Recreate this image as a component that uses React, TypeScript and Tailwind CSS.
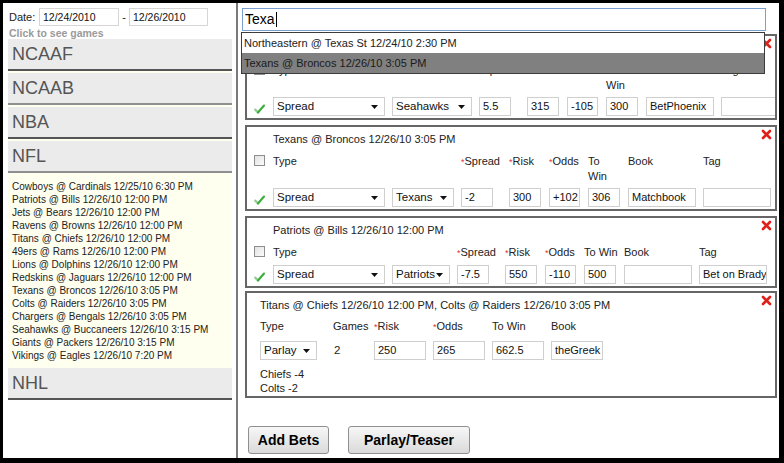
import React from "react";

const sans = "font-['Liberation_Sans',Arial,sans-serif]";

function Check() {
  return (
    <svg width="11" height="10" viewBox="0 0 11 10">
      <path d="M1.2 5.6 L4 8.4" fill="none" stroke="#8fd08f" strokeWidth="2.2" strokeLinecap="round" />
      <path d="M4 8.4 L10 1.6" fill="none" stroke="#3fae3f" strokeWidth="2.2" strokeLinecap="round" />
    </svg>
  );
}

function RedX() {
  return (
    <svg width="11" height="11" viewBox="0 0 11 11">
      <path d="M2 2 L9 9 M9 2 L2 9" fill="none" stroke="#e0201a" strokeWidth="2.6" strokeLinecap="round" />
    </svg>
  );
}

function Checkbox() {
  return <div className="mt-[1px] h-[11px] w-[11px] border border-[#8e8e8e] bg-gradient-to-br from-[#e2e2e2] to-[#fbfbfb]" />;
}

function Arrow() {
  return (
    <svg width="7" height="4" viewBox="0 0 7 4" className="shrink-0">
      <path d="M0 0 L7 0 L3.5 4 Z" fill="#111" />
    </svg>
  );
}

function Inp({ v, cls }: { v: string; cls: string }) {
  return (
    <div className={`h-[19px] shrink-0 overflow-hidden whitespace-nowrap border border-[#cfcfcf] bg-white pl-[3px] pr-[1px] text-[11px] leading-[17px] text-[#111] ${cls}`}>
      {v}
    </div>
  );
}

function Sel({ v, cls }: { v: string; cls: string }) {
  return (
    <div className={`flex h-[19px] shrink-0 items-center justify-between border border-[#cfcfcf] bg-white pl-[3px] pr-[6px] text-[11.5px] text-[#111] ${cls}`}>
      <span>{v}</span>
      <Arrow />
    </div>
  );
}

function Req({ t }: { t: string }) {
  return (
    <span className="whitespace-nowrap">
      <span className="text-[9px] text-[#e03030]">*</span>
      {t}
    </span>
  );
}

type Bet = {
  title: string;
  team: string;
  teamW: string;
  spread: string;
  risk: string;
  odds: string;
  win: string;
  book: string;
  tag: string;
  twoLine: boolean;
};

function BetCard({ b, mt }: { b: Bet; mt: string }) {
  return (
    <div className={`relative ml-[7px] w-[532px] overflow-hidden border-2 border-[#666] bg-white pb-[2px] pl-[7px] pt-[5px] ${mt}`}>
      <div className="absolute right-[3px] top-[2px]">
        <RedX />
      </div>
      <div className="pl-[19px] text-[11px] leading-[14px] text-[#222]">{b.title}</div>
      <div className="mt-[8px] flex items-start text-[11px] leading-[15px] text-[#222]">
        <div className="w-[19px] shrink-0">
          <Checkbox />
        </div>
        <div className="w-[112px] shrink-0">Type</div>
        <div className={`ml-[7px] shrink-0 ${b.teamW}`} />
        <div className="ml-[7px] w-[32px] shrink-0">
          <Req t="Spread" />
        </div>
        <div className="ml-[16px] w-[32px] shrink-0">
          <Req t="Risk" />
        </div>
        <div className="ml-[8px] w-[31px] shrink-0">
          <Req t="Odds" />
        </div>
        <div className="ml-[8px] w-[32px] shrink-0 whitespace-nowrap">
          {b.twoLine ? (
            <>
              To
              <br />
              Win
            </>
          ) : (
            "To Win"
          )}
        </div>
        <div className="ml-[8px] w-[68px] shrink-0">Book</div>
        <div className="ml-[7px] w-[68px] shrink-0">Tag</div>
      </div>
      <div className="mt-[4px] flex items-center">
        <div className="w-[19px] shrink-0 pt-[4px]">
          <Check />
        </div>
        <Sel v="Spread" cls="w-[112px]" />
        <Sel v={b.team} cls={`ml-[7px] ${b.teamW}`} />
        <Inp v={b.spread} cls="ml-[7px] w-[32px]" />
        <Inp v={b.risk} cls="ml-[16px] w-[32px]" />
        <Inp v={b.odds} cls="ml-[8px] w-[31px]" />
        <Inp v={b.win} cls="ml-[8px] w-[32px]" />
        <Inp v={b.book} cls="ml-[8px] w-[68px]" />
        <Inp v={b.tag} cls="ml-[7px] w-[68px]" />
      </div>
    </div>
  );
}

const games = [
  "Cowboys @ Cardinals 12/25/10 6:30 PM",
  "Patriots @ Bills 12/26/10 12:00 PM",
  "Jets @ Bears 12/26/10 12:00 PM",
  "Ravens @ Browns 12/26/10 12:00 PM",
  "Titans @ Chiefs 12/26/10 12:00 PM",
  "49ers @ Rams 12/26/10 12:00 PM",
  "Lions @ Dolphins 12/26/10 12:00 PM",
  "Redskins @ Jaguars 12/26/10 12:00 PM",
  "Texans @ Broncos 12/26/10 3:05 PM",
  "Colts @ Raiders 12/26/10 3:05 PM",
  "Chargers @ Bengals 12/26/10 3:05 PM",
  "Seahawks @ Buccaneers 12/26/10 3:15 PM",
  "Giants @ Packers 12/26/10 3:15 PM",
  "Vikings @ Eagles 12/26/10 7:20 PM",
];

function LeagueHead({ name, line }: { name: string; line: string }) {
  return (
    <div className={`flex h-[32px] items-center border-b-2 bg-[#ebebeb] pl-[4px] text-[18px] text-[#555] ${line}`}>
      {name}
    </div>
  );
}

export default function App() {
  return (
    <div className={`h-[463px] w-[784px] bg-black pb-[5px] pl-[3px] pr-[5px] pt-[3px] ${sans}`}>
      <div className="flex h-full bg-white">
        {/* Left panel */}
        <div className="w-[235px] shrink-0 border-r-2 border-[#7a7a7a] pt-[5px]">
          <div className="flex h-[18px] items-center pl-[6px] text-[11px] text-[#222]">
            <span className="w-[30px] shrink-0">Date:</span>
            <div className="h-[18px] w-[80px] border border-[#d6d6d6] pl-[3px] text-[10.5px] leading-[16px] text-[#111]">12/24/2010</div>
            <span className="w-[10px] text-center">-</span>
            <div className="h-[18px] w-[79px] border border-[#d6d6d6] pl-[3px] text-[10.5px] leading-[16px] text-[#111]">12/26/2010</div>
          </div>
          <div className="mt-[2px] pl-[6px] text-[10.5px] font-bold leading-[11px] text-[#9a9a9a]">Click to see games</div>
          <div className="ml-[5px] w-[224px] bg-[#fffff0]">
            <LeagueHead name="NCAAF" line="border-[#555]" />
            <div className="h-[2px]" />
            <LeagueHead name="NCAAB" line="border-[#8f8f8f]" />
            <div className="h-[2px]" />
            <LeagueHead name="NBA" line="border-[#555]" />
            <div className="h-[2px]" />
            <LeagueHead name="NFL" line="border-[#8f8f8f]" />
            <div className="pb-[6px] pl-[4px] pt-[7px] text-[10px] leading-[13px] text-[#222]">
              {games.map((g) => (
                <div key={g} className="whitespace-nowrap">
                  {g}
                </div>
              ))}
            </div>
            <LeagueHead name="NHL" line="border-[#555]" />
          </div>
        </div>

        {/* Right panel */}
        <div className="relative flex-1 overflow-hidden pt-[5px]">
          <div className="ml-[4px] flex h-[23px] w-[524px] items-center border border-[#7b9fd0] bg-white pl-[2px] text-[14px] text-black">
            Texa<span className="ml-[1px] h-[15px] w-[1px] bg-black" />
          </div>

          <BetCard
            mt="mt-[3px]"
            b={{
              title: "Seahawks @ Buccaneers 12/26/10 3:15 PM",
              team: "Seahawks",
              teamW: "w-[80px]",
              spread: "5.5",
              risk: "315",
              odds: "-105",
              win: "300",
              book: "BetPhoenix",
              tag: "",
              twoLine: true,
            }}
          />
          <BetCard
            mt="mt-[5px]"
            b={{
              title: "Texans @ Broncos 12/26/10 3:05 PM",
              team: "Texans",
              teamW: "w-[62px]",
              spread: "-2",
              risk: "300",
              odds: "+102",
              win: "306",
              book: "Matchbook",
              tag: "",
              twoLine: true,
            }}
          />
          <BetCard
            mt="mt-[5px]"
            b={{
              title: "Patriots @ Bills 12/26/10 12:00 PM",
              team: "Patriots",
              teamW: "w-[58px]",
              spread: "-7.5",
              risk: "550",
              odds: "-110",
              win: "500",
              book: "",
              tag: "Bet on Brady",
              twoLine: false,
            }}
          />

          {/* Parlay card */}
          <div className="relative ml-[7px] mt-[3px] w-[532px] border-2 border-[#666] bg-white pb-[1px] pl-[13px] pt-[5px] text-[11px] text-[#222]">
            <div className="absolute right-[3px] top-[2px]">
              <RedX />
            </div>
            <div className="leading-[14px]">Titans @ Chiefs 12/26/10 12:00 PM, Colts @ Raiders 12/26/10 3:05 PM</div>
            <div className="mt-[7px] flex leading-[14px]">
              <div className="w-[73px]">Type</div>
              <div className="w-[41px]">Games</div>
              <div className="w-[59px]">
                <Req t="Risk" />
              </div>
              <div className="w-[59px]">
                <Req t="Odds" />
              </div>
              <div className="w-[59px]">To Win</div>
              <div className="w-[59px]">Book</div>
            </div>
            <div className="mt-[7px] flex items-center">
              <div className="w-[73px]">
                <Sel v="Parlay" cls="h-[19px] w-[57px]" />
              </div>
              <div className="w-[41px] pl-[1px] text-[11.5px]">2</div>
              <div className="w-[59px]">
                <Inp v="250" cls="w-[52px]" />
              </div>
              <div className="w-[59px]">
                <Inp v="265" cls="w-[52px]" />
              </div>
              <div className="w-[59px]">
                <Inp v="662.5" cls="w-[52px]" />
              </div>
              <div className="w-[59px]">
                <Inp v="theGreek" cls="w-[52px]" />
              </div>
            </div>
            <div className="mt-[7px] leading-[14px]">Chiefs -4</div>
            <div className="leading-[14px]">Colts -2</div>
          </div>

          <div className="ml-[10px] mt-[28px] flex gap-[19px]">
            <button className="h-[28px] w-[81px] rounded-[3px] border border-[#8f8f8f] bg-gradient-to-b from-[#f7f7f7] to-[#dadada] text-[14px] font-bold text-black">
              Add Bets
            </button>
            <button className="h-[28px] w-[122px] rounded-[3px] border border-[#8f8f8f] bg-gradient-to-b from-[#f7f7f7] to-[#dadada] text-[14px] font-bold text-black">
              Parlay/Teaser
            </button>
          </div>

          {/* Autocomplete dropdown */}
          <div className="absolute left-[3px] top-[29px] w-[524px] border border-[#3c3c3c] text-[11px]">
            <div className="h-[20px] bg-white pl-[2px] leading-[20px] text-[#222]">Northeastern @ Texas St 12/24/10 2:30 PM</div>
            <div className="h-[20px] bg-[#808080] pl-[2px] leading-[20px] text-[#1a1a1a]">Texans @ Broncos 12/26/10 3:05 PM</div>
          </div>
        </div>
      </div>
    </div>
  );
}
